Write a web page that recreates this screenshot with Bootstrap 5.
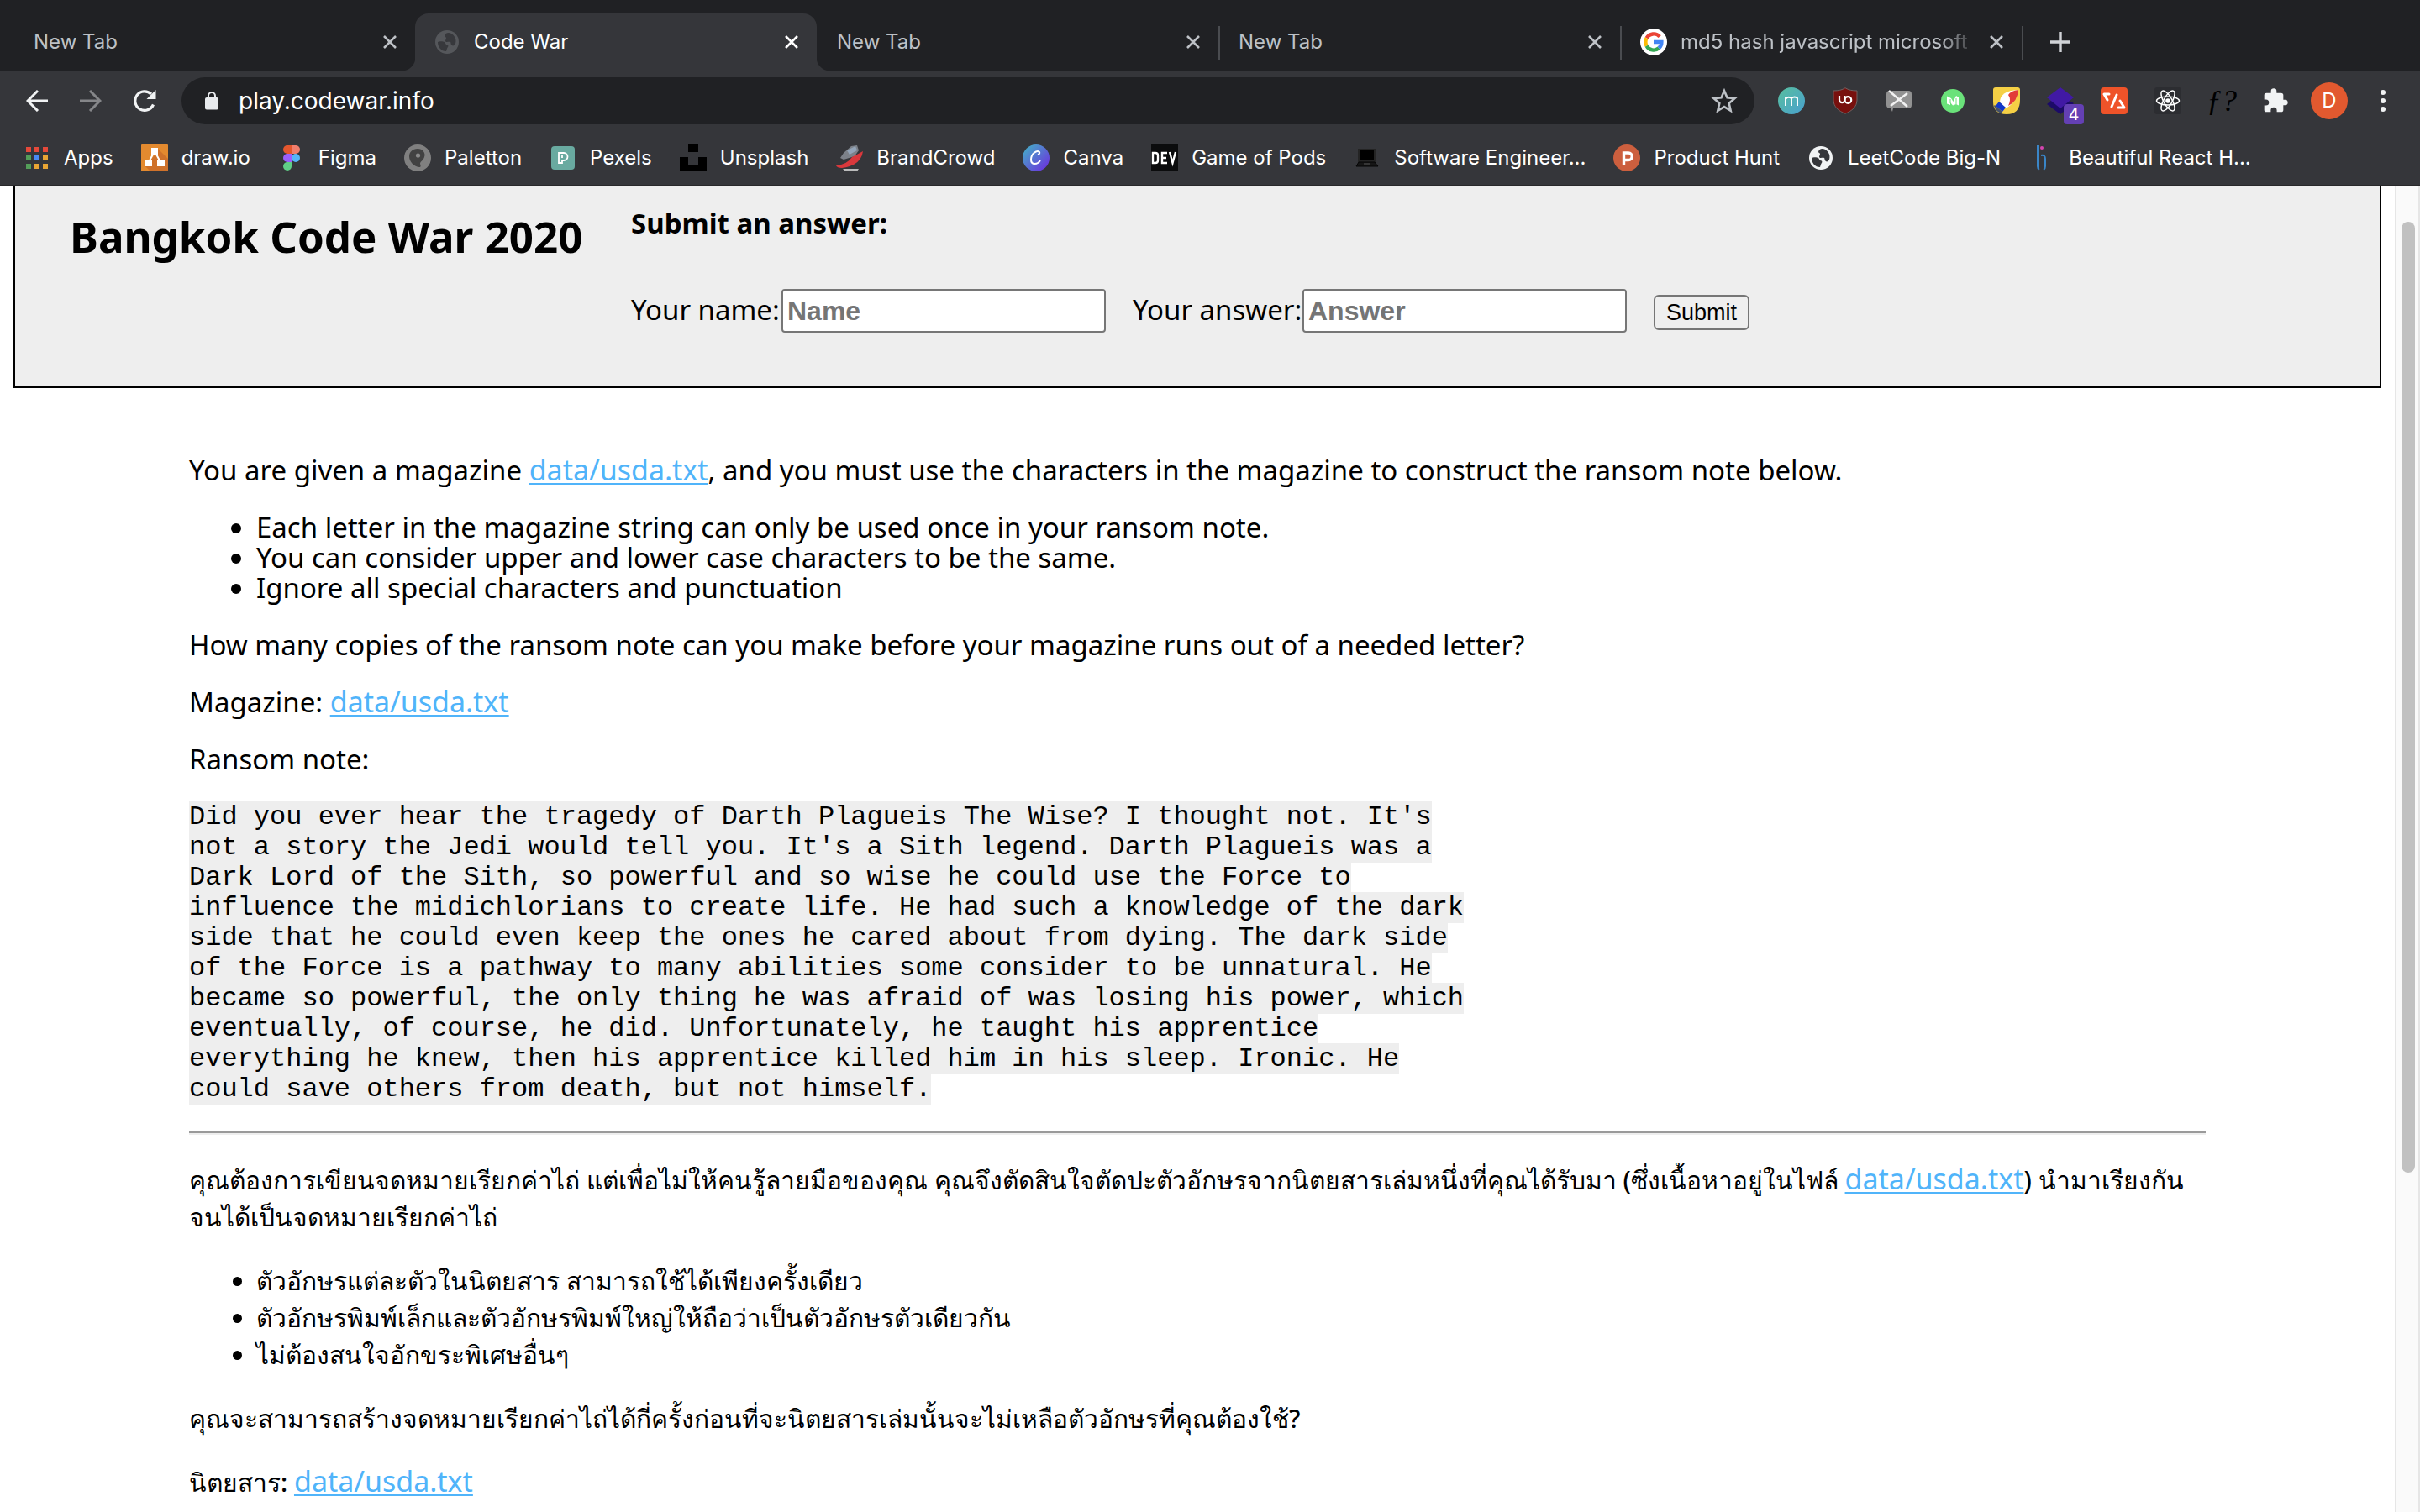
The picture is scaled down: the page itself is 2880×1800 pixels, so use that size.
<!DOCTYPE html>
<html lang="en">
<head>
<meta charset="utf-8">
<meta name="viewport" content="width=device-width, initial-scale=1">
<title>Code War</title>
<link href="https://cdn.jsdelivr.net/npm/bootstrap@5.3.0/dist/css/bootstrap.min.css" rel="stylesheet">
<style>
  body { color: #000; background: #fff; }
  svg { display: block; flex: none; }

  /* browser frame */
  .chrome-ui { font: 24px/32px Inter, "Noto Sans", sans-serif; background: #35363a; color: #fff; border-bottom: 2px solid #28282a; }
  .chrome-ui button { background: none; border: 0; padding: 0; color: inherit; }
  .chrome-ui a { color: inherit; text-decoration: none; }
  .tab-strip { background: #202124; height: 84px; padding: 16px 0 0 16px; }
  .tab-item { width: 478px; height: 68px; padding: 0 22px 0 24px; gap: 16px; color: #bdc1c6; position: relative; }
  .tab-item.current { background: #35363a; color: #fff; border-radius: 16px 16px 0 0; gap: 18px; }
  .tab-item.current::before, .tab-item.current::after { content: ""; position: absolute; bottom: 0; width: 16px; height: 16px; }
  .tab-item.current::before { left: -16px; background: radial-gradient(circle at 0 0, #202124 16px, #35363a 17px); }
  .tab-item.current::after { right: -16px; background: radial-gradient(circle at 100% 0, #202124 16px, #35363a 17px); }
  .tab-item.ruled::after { content: ""; position: absolute; right: -2px; top: 15px; width: 2px; height: 40px; background: #4a4c50; }
  .tab-label { overflow: hidden; white-space: nowrap; }
  .tab-label.faded { -webkit-mask-image: linear-gradient(90deg, #000 88%, transparent); mask-image: linear-gradient(90deg, #000 88%, transparent); }
  .new-tab { width: 92px; }
  .tool-row { padding: 8px 12px; }
  .tool { width: 64px; height: 56px; display: flex; align-items: center; justify-content: center; position: relative; }
  .omnibox { background: #202124; height: 56px; border-radius: 28px; margin: 0 12px; padding: 0 20px 0 28px; gap: 24px; }
  .omnibox input { background: none; border: 0; padding: 0; color: #fff; font-size: 28px; outline: 0; }
  .count-badge { position: absolute; right: 4px; bottom: 0; width: 24px; height: 24px; border-radius: 4px; background: #6440b4; font-size: 20px; line-height: 25px; text-align: center; }
  .avatar { width: 44px; height: 44px; border-radius: 50%; background: #e2592f; line-height: 44px; text-align: center; }
  .chrome-ui .fn-mark { font: italic 36px/36px "Liberation Serif", serif; color: #000; }
  .bookmark-row { padding: 16px 28px; gap: 33px; height: 64px; white-space: nowrap; }
  .bookmark-row a { display: flex; align-items: center; gap: 16px; }
  .bm-icon { width: 32px; height: 32px; display: flex; align-items: center; justify-content: center; }

  /* page */
  .viewport { font: 33px/36px "Noto Sans", "DejaVu Sans", sans-serif; }
  .banner { margin: 0 16px; padding: 26px 65px 64px; background: #eee; border: 2px solid #000; border-top: 0; }
  .banner h1 { font-size: 51px; line-height: 60px; font-weight: 700; margin: 3px 0 0; width: 668px; }
  .banner h2 { font-size: 33px; line-height: 36px; font-weight: 700; margin: 0 0 60px; }
  .field { width: 386px; height: 52px; border: 2px solid #767676; border-radius: 4px; padding: 0 5px; background: #fff; font: bold 32px "Liberation Sans", sans-serif; }
  .field::placeholder { color: #757575; opacity: 1; }
  .field-label { width: 202px; }
  .field-label.short { width: 179px; }
  .answer-group { margin-left: 32px; }
  .send { height: 42px; width: 114px; border: 2px solid #767676; border-radius: 6px; background: #efefef; color: #000; font: 27px/31px "Liberation Sans", sans-serif; padding: 0; margin-left: 32px; }
  .article { max-width: 2400px; margin: 80px auto 0; }
  .article p, .article ul { margin: 0 0 32px; }
  .article ul { padding-left: 80px; }
  .article a { font-size: 34px; line-height: 1; color: #50b4fa; text-decoration: underline; text-decoration-thickness: 2px; text-decoration-skip-ink: none; text-underline-offset: 3px; }
  .article pre { font: 32px/36px "Liberation Mono", monospace; margin: 0 0 32px; padding-top: 1px; overflow: visible; }
  .article pre code { font: inherit; color: #000; background: #eee; }
  .article hr { margin: 0 0 32px; border: 0; border-top: 2px solid #9a9a9a; border-bottom: 2px solid #eee; opacity: 1; height: 4px; }
  .thai { font-size: 30px; line-height: 44px; font-weight: 500; }
  .thai a { font-weight: 400; }
  .scroll-track { width: 30px; padding: 42px 4px 0 6px; background: #fafafa; border: 1px solid #e6e6e6; border-width: 0 2px; }
  .scroll-thumb { width: 16px; height: 1132px; border-radius: 8px; background: #c1c1c1; }
</style>
<script src="https://cdn.jsdelivr.net/npm/bootstrap@5.3.0/dist/js/bootstrap.bundle.min.js"></script>
</head>
<body class="d-flex flex-column vh-100 overflow-hidden">
<svg width="0" height="0" class="position-absolute" aria-hidden="true">
  <symbol id="cross" viewBox="0 0 16 16"><path d="M1 1l14 14M15 1L1 15" stroke="currentColor" stroke-width="2.6" fill="none"/></symbol>
  <symbol id="globe" viewBox="0 0 28 28"><circle cx="14" cy="14" r="14" fill="var(--sea)"/><path d="M3 14c2-1 6-1 8 0 1 1 1 2 2 3 2 0 3 1 2 3-1 1-1 2-2 5-6 0-10-5-10-11zM16 3c-3 0-5 2-5 4 0 1 2 1 2 2 0 2-1 2-1 4 1 2 4 0 6 1 1 1 0 3 2 4 1 1 3 0 4-2 2-6-2-12-8-13z" fill="var(--land)"/></symbol>
</svg>

<header class="chrome-ui flex-shrink-0">
  <nav class="tab-strip d-flex" aria-label="Tabs">
    <div class="tab-item d-flex align-items-center"><a href="#" class="tab-label flex-grow-1">New Tab</a><button aria-label="Close tab"><svg width="16" height="16"><use href="#cross"/></svg></button></div>
    <div class="tab-item current d-flex align-items-center"><svg width="28" height="28" style="--sea:#55575b;--land:#37383c"><use href="#globe"/></svg><a href="#" class="tab-label flex-grow-1">Code War</a><button aria-label="Close tab"><svg width="16" height="16"><use href="#cross"/></svg></button></div>
    <div class="tab-item ruled d-flex align-items-center"><a href="#" class="tab-label flex-grow-1">New Tab</a><button aria-label="Close tab"><svg width="16" height="16"><use href="#cross"/></svg></button></div>
    <div class="tab-item ruled d-flex align-items-center"><a href="#" class="tab-label flex-grow-1">New Tab</a><button aria-label="Close tab"><svg width="16" height="16"><use href="#cross"/></svg></button></div>
    <div class="tab-item ruled d-flex align-items-center">
      <svg width="32" height="32" viewBox="0 0 32 32"><circle cx="16" cy="16" r="16" fill="#fff"/><g fill="none" stroke-width="4.4"><path d="M23.2 9.6A9.6 9.6 0 0 0 7.6 11.4" stroke="#ea4335"/><path d="M7.6 11.4a9.6 9.6 0 0 0 0 9.2" stroke="#fbbc05"/><path d="M7.6 20.6a9.6 9.6 0 0 0 14.6 2.7" stroke="#34a853"/><path d="M22.2 23.3A9.6 9.6 0 0 0 25.4 16H16" stroke="#4285f4"/></g></svg>
      <a href="#" class="tab-label faded flex-grow-1">md5 hash javascript microsoft</a><button aria-label="Close tab"><svg width="16" height="16"><use href="#cross"/></svg></button></div>
    <button class="new-tab d-flex align-items-center justify-content-center" aria-label="New tab"><svg width="24" height="24" viewBox="0 0 24 24"><path d="M12 0v24M0 12h24" stroke="#d0d3d7" stroke-width="3.4"/></svg></button>
  </nav>

  <div class="tool-row d-flex align-items-center">
    <button class="tool" aria-label="Back"><svg width="26" height="26" viewBox="0 0 26 26" fill="none" stroke="#f1f3f4" stroke-width="3"><path d="M26 13H2M14 1L2 13l12 12"/></svg></button>
    <button class="tool" aria-label="Forward"><svg width="26" height="26" viewBox="0 0 26 26" fill="none" stroke="#858689" stroke-width="3"><path d="M0 13h24M12 1l12 12-12 12"/></svg></button>
    <button class="tool" aria-label="Reload"><svg width="28" height="28" viewBox="0 0 28 28"><path d="M24.5 18.5A11.3 11.3 0 1 1 22 6" fill="none" stroke="#f1f3f4" stroke-width="3.2"/><path d="M27.500 1v11h-11z" fill="#f1f3f4"/></svg></button>
    <div class="omnibox d-flex align-items-center flex-grow-1">
      <svg width="16" height="22" viewBox="0 0 16 22"><rect y="7" width="16" height="14.500" rx="2" fill="#e8eaed"/><path d="M4 8V5a4 4 0 0 1 8 0v3" fill="none" stroke="#e8eaed" stroke-width="2"/></svg>
      <input class="flex-grow-1" type="text" value="play.codewar.info" aria-label="Address">
      <button aria-label="Bookmark this page"><svg width="32" height="32" viewBox="0 0 32 32"><path d="M16 4l3.500 8.300 9 .8-6.800 5.900 2 8.800L16 23.100l-7.700 4.700 2-8.800-6.800-5.900 9-.8z" fill="none" stroke="#bdc1c6" stroke-width="2.600"/></svg></button>
    </div>
    <button class="tool" aria-label="m extension"><svg width="32" height="32" viewBox="0 0 32 32"><defs><linearGradient id="gm" x2="1" y2="1"><stop stop-color="#58bf9e"/><stop offset="1" stop-color="#49a0cf"/></linearGradient></defs><circle cx="16" cy="16" r="16" fill="url(#gm)"/><path d="M9 22V11M9 14q3-4 7-1v9M16 13q4-3 7 0v9" fill="none" stroke="#fff" stroke-width="1.900"/></svg></button>
    <button class="tool" aria-label="uBlock Origin"><svg width="32" height="32" viewBox="0 0 32 32"><path d="M16 .7c4 2.500 8 3.300 14 3.300v11c0 8-6 13-14 16.300C8 28 2 23 2 15V4c6 0 10-.8 14-3.300z" fill="#78100e" stroke="#6f6060"/><path d="M9 10v5a3.200 3.200 0 0 0 6.400 0v-5" fill="none" stroke="#fff" stroke-width="2.200"/><circle cx="19.300" cy="15" r="3.900" fill="none" stroke="#fff" stroke-width="2.200"/></svg></button>
    <button class="tool" aria-label="Message blocker"><svg width="32" height="32" viewBox="0 0 32 32"><path d="M5 4h22q4 0 4 4v13q0 4-4 4H9l-1 4-2-4q-5 0-5-4V8q0-4 4-4z" fill="#929292"/><path d="M4 4l22 19M26 7L6 22" stroke="#f2f2f2" stroke-width="2.400"/></svg></button>
    <button class="tool" aria-label="Medium tool"><svg width="28" height="28" viewBox="0 0 28 28"><circle cx="14" cy="14" r="14" fill="#6ae27a"/><path d="M7 8.500l5 2.500 2.500 4L18 8l3 2v9.500l-3-1.500-4 1.500-3-3.500v3L7 17.500z" fill="#fff"/><path d="M11 12v5M18 11v7" stroke="#6ae27a"/></svg></button>
    <button class="tool" aria-label="Paint tool"><svg width="32" height="32" viewBox="0 0 32 32"><path d="M3 0h26q3 0 3 3v12Q32 32 16 32 0 32 0 17V3q0-3 3-3z" fill="#f5d045"/><path d="M30 3Q8 4 8 18l7 7q6-3 10-9z" fill="#fff"/><path d="M30 3q-9 1-12 6 4 5 0 13 11-5 12-19z" fill="#e23c38"/><path d="M7 17l8 7-4 5-8-7z" fill="#1238c8"/><path d="M2 21l9 8-1 2q-7-2-9-9z" fill="#445069"/></svg></button>
    <button class="tool" aria-label="Layers, 4 items"><svg width="32" height="32" viewBox="0 0 32 32"><path d="M0 20l6-5 10 8 11-7 5 3-16 13z" fill="#1c0b68"/><path d="M16 0l16 12-16 13L0 12z" fill="#4119a5"/></svg><span class="count-badge">4</span></button>
    <button class="tool" aria-label="Code tool"><svg width="32" height="32" viewBox="0 0 32 32"><rect width="32" height="32" rx="4" fill="#ef5329"/><path d="M10 8H4l4 7M19 9l-6 14M23 16l5 8h-7" fill="none" stroke="#fff" stroke-width="3" stroke-linecap="round" stroke-linejoin="round"/></svg></button>
    <button class="tool" aria-label="React Developer Tools"><svg width="32" height="32" viewBox="0 0 32 32"><rect width="32" height="32" rx="3" fill="#2c2d31"/><circle cx="16" cy="16" r="2.800" fill="#fff"/><g fill="none" stroke="#fff" stroke-width="1.500"><ellipse cx="16" cy="16" rx="13.500" ry="5"/><ellipse cx="16" cy="16" rx="13.500" ry="5" transform="rotate(60 16 16)"/><ellipse cx="16" cy="16" rx="13.500" ry="5" transform="rotate(120 16 16)"/></g></svg></button>
    <button class="tool fn-mark" aria-label="WhatFont">&#402;?</button>
    <button class="tool" aria-label="Extensions"><svg width="32" height="32" viewBox="0 0 24 24"><path d="M20.500 11H19V7a2 2 0 0 0-2-2h-4V3.500a2.500 2.500 0 0 0-5 0V5H4a2 2 0 0 0-2 2v3.800h1.500a2.700 2.700 0 0 1 0 5.400H2V20a2 2 0 0 0 2 2h3.800v-1.500a2.700 2.700 0 0 1 5.400 0V22H17a2 2 0 0 0 2-2v-4h1.500a2.500 2.500 0 0 0 0-5z" fill="#f1f3f4"/></svg></button>
    <button class="tool" aria-label="Profile"><span class="avatar">D</span></button>
    <button class="tool" aria-label="Menu"><svg width="6" height="26" viewBox="0 0 6 26" fill="#f1f3f4"><circle cx="3" cy="3" r="3"/><circle cx="3" cy="13" r="3"/><circle cx="3" cy="23" r="3"/></svg></button>
  </div>

  <nav class="bookmark-row d-flex align-items-center" aria-label="Bookmarks">
    <a href="#"><span class="bm-icon"><svg width="26" height="26" viewBox="0 0 26 26"><g fill="#e5493a"><path d="M0 0h6v6H0zM10 0h6v6h-6zM20 0h6v6h-6z"/></g><path d="M0 10h6v6H0zM0 20h6v6H0z" fill="#549e59"/><path d="M10 10h6v6h-6z" fill="#4a8af4"/><path d="M20 10h6v6h-6zM10 20h6v6h-6zM20 20h6v6h-6z" fill="#e9a534"/></svg></span>Apps</a>
    <a href="#"><span class="bm-icon"><svg width="32" height="32" viewBox="0 0 32 32"><rect width="32" height="32" rx="1" fill="#e38a2f"/><path d="M20 5l12 12v15H11l-7-7 12-12z" fill="#cf722b"/><path d="M16 8L9 21M16 8l7 13" stroke="#fff" stroke-width="2"/><path d="M12 4h8v8h-8zM4 18h9v8H4zM19 18h9v8h-9z" fill="#fff"/></svg></span>draw.io</a>
    <a href="#"><span class="bm-icon"><svg width="20" height="30" viewBox="0 0 20 30"><path d="M10 0H5a5 5 0 0 0 0 10h5z" fill="#e4572e"/><path d="M10 0h5a5 5 0 0 1 0 10h-5z" fill="#f17e6c"/><path d="M10 10H5a5 5 0 0 0 0 10h5z" fill="#9b5ffb"/><circle cx="15" cy="15" r="5" fill="#55b5f8"/><path d="M10 20H5a5 5 0 1 0 5 5z" fill="#60ce87"/></svg></span>Figma</a>
    <a href="#"><span class="bm-icon"><svg width="32" height="32" viewBox="0 0 32 32"><circle cx="16" cy="16" r="16" fill="#808080"/><path d="M16 5c6 0 10 5 8 10-1 4-5 5-5 8 1 3 1 4-1 4C11 26 6 20 6 14c0-5 4-9 10-9z" fill="#424242"/><circle cx="16.500" cy="13" r="2.600" fill="#8a8a8a"/></svg></span>Paletton</a>
    <a href="#"><span class="bm-icon"><svg width="28" height="28" viewBox="0 0 28 28"><rect width="28" height="28" rx="4" fill="#69aaa0"/><path d="M9 20V8h6a4 4 0 0 1 0 9h-2v3z" fill="none" stroke="#fff" stroke-width="1.800"/><path d="M13 11v3" stroke="#fff" stroke-width="1.800"/></svg></span>Pexels</a>
    <a href="#"><span class="bm-icon"><svg width="32" height="32" viewBox="0 0 32 32"><path d="M10 0h12v9H10zM0 15h10v9h12v-9h10v17H0z"/></svg></span>Unsplash</a>
    <a href="#"><span class="bm-icon"><svg width="32" height="32" viewBox="0 0 32 32"><path d="M9 10l9-8 7-1 2 6-5 7-13 4-4-2z" fill="#7c8189"/><path d="M13 7l10-5 2 5-9 5z" fill="#93a4b8"/><path d="M0 25q13-1 19-10l13-7q-2 17-25 20-6 0-7-3z" fill="#d9383c"/><path d="M8 29h19l-2 3H11z" fill="#bbb"/></svg></span>BrandCrowd</a>
    <a href="#"><span class="bm-icon"><svg width="32" height="32" viewBox="0 0 32 32"><defs><linearGradient id="gc" x2="1" y2="1"><stop offset=".1" stop-color="#46a9c8"/><stop offset=".9" stop-color="#6a35dd"/></linearGradient></defs><circle cx="16" cy="16" r="16" fill="url(#gc)"/><path d="M18 12q3-1 2-3c-3-3-10 2-10 9 0 7 8 6 11 1" fill="none" stroke="#fff" stroke-width="2"/></svg></span>Canva</a>
    <a href="#"><span class="bm-icon"><svg width="32" height="32" viewBox="0 0 32 32"><rect width="32" height="32" fill="#0b0c0d"/><path d="M2 10v12h3q3 0 3-3v-6q0-3-3-3zM19 10h-6v12h6M13 16h5M22 9l3.500 13L29 9" fill="none" stroke="#fff" stroke-width="2.400"/></svg></span>Game of Pods</a>
    <a href="#"><span class="bm-icon"><svg width="28" height="22" viewBox="0 0 28 22"><path d="M4 1h19v14H4z" fill="#000" stroke="#242424" stroke-width="2"/><path d="M4 16h19l4 5H1z" fill="#161616" stroke="#050505"/><path d="M10 18h8" stroke="#555"/></svg></span>Software Engineer...</a>
    <a href="#"><span class="bm-icon"><svg width="32" height="32" viewBox="0 0 32 32"><circle cx="16" cy="16" r="16" fill="#cc5f3e"/><path d="M12.500 24V10H18a4 4 0 0 1 0 8.500h-5" fill="none" stroke="#fff" stroke-width="3.400"/></svg></span>Product Hunt</a>
    <a href="#"><span class="bm-icon"><svg width="28" height="28" style="--sea:#f1f3f4;--land:#35363a"><use href="#globe"/></svg></span>LeetCode Big-N</a>
    <a href="#"><span class="bm-icon"><svg width="14" height="30" viewBox="0 0 14 30"><path d="M4 1H2v24q0 3 2 4M6 12q5-1 5 4v9q0 3-2 4" fill="none" stroke="#3a86c8" stroke-width="2"/><circle cx="7" cy="3" r="2" fill="#d645b0"/></svg></span>Beautiful React H...</a>
  </nav>
</header>

<div class="viewport d-flex flex-grow-1 overflow-hidden">
  <main class="flex-grow-1 overflow-hidden">
    <section class="banner d-flex">
      <h1>Bangkok Code War 2020</h1>
      <form>
        <h2>Submit an answer:</h2>
        <div class="d-flex align-items-baseline">
          <label class="field-label short" for="name">Your name:</label>
          <input class="field" id="name" type="text" placeholder="Name">
          <div class="answer-group d-flex align-items-baseline">
            <label class="field-label" for="answer">Your answer:</label>
            <input class="field" id="answer" type="text" placeholder="Answer">
          </div>
          <button class="send" type="button">Submit</button>
        </div>
      </form>
    </section>

    <article class="article">
      <p>You are given a magazine <a href="#">data/usda.txt</a>, and you must use the characters in the magazine to construct the ransom note below.</p>
      <ul>
        <li>Each letter in the magazine string can only be used once in your ransom note.</li>
        <li>You can consider upper and lower case characters to be the same.</li>
        <li>Ignore all special characters and punctuation</li>
      </ul>
      <p>How many copies of the ransom note can you make before your magazine runs out of a needed letter?</p>
      <p>Magazine: <a href="#">data/usda.txt</a></p>
      <p>Ransom note:</p>
<pre><code>Did you ever hear the tragedy of Darth Plagueis The Wise? I thought not. It's
not a story the Jedi would tell you. It's a Sith legend. Darth Plagueis was a
Dark Lord of the Sith, so powerful and so wise he could use the Force to
influence the midichlorians to create life. He had such a knowledge of the dark
side that he could even keep the ones he cared about from dying. The dark side
of the Force is a pathway to many abilities some consider to be unnatural. He
became so powerful, the only thing he was afraid of was losing his power, which
eventually, of course, he did. Unfortunately, he taught his apprentice
everything he knew, then his apprentice killed him in his sleep. Ironic. He
could save others from death, but not himself.</code></pre>
      <hr>
      <div class="thai" lang="th">
        <p>คุณต้องการเขียนจดหมายเรียกค่าไถ่ แต่เพื่อไม่ให้คนรู้ลายมือของคุณ คุณจึงตัดสินใจตัดปะตัวอักษรจากนิตยสารเล่มหนึ่งที่คุณได้รับมา (ซึ่งเนื้อหาอยู่ในไฟล์ <a href="#">data/usda.txt</a>) นำมาเรียงกันจนได้เป็นจดหมายเรียกค่าไถ่</p>
        <ul>
          <li>ตัวอักษรแต่ละตัวในนิตยสาร สามารถใช้ได้เพียงครั้งเดียว</li>
          <li>ตัวอักษรพิมพ์เล็กและตัวอักษรพิมพ์ใหญ่ให้ถือว่าเป็นตัวอักษรตัวเดียวกัน</li>
          <li>ไม่ต้องสนใจอักขระพิเศษอื่นๆ</li>
        </ul>
        <p>คุณจะสามารถสร้างจดหมายเรียกค่าไถ่ได้กี่ครั้งก่อนที่จะนิตยสารเล่มนั้นจะไม่เหลือตัวอักษรที่คุณต้องใช้?</p>
        <p>นิตยสาร: <a href="#">data/usda.txt</a></p>
      </div>
    </article>
  </main>
  <div class="scroll-track flex-shrink-0"><div class="scroll-thumb"></div></div>
</div>
</body>
</html>
